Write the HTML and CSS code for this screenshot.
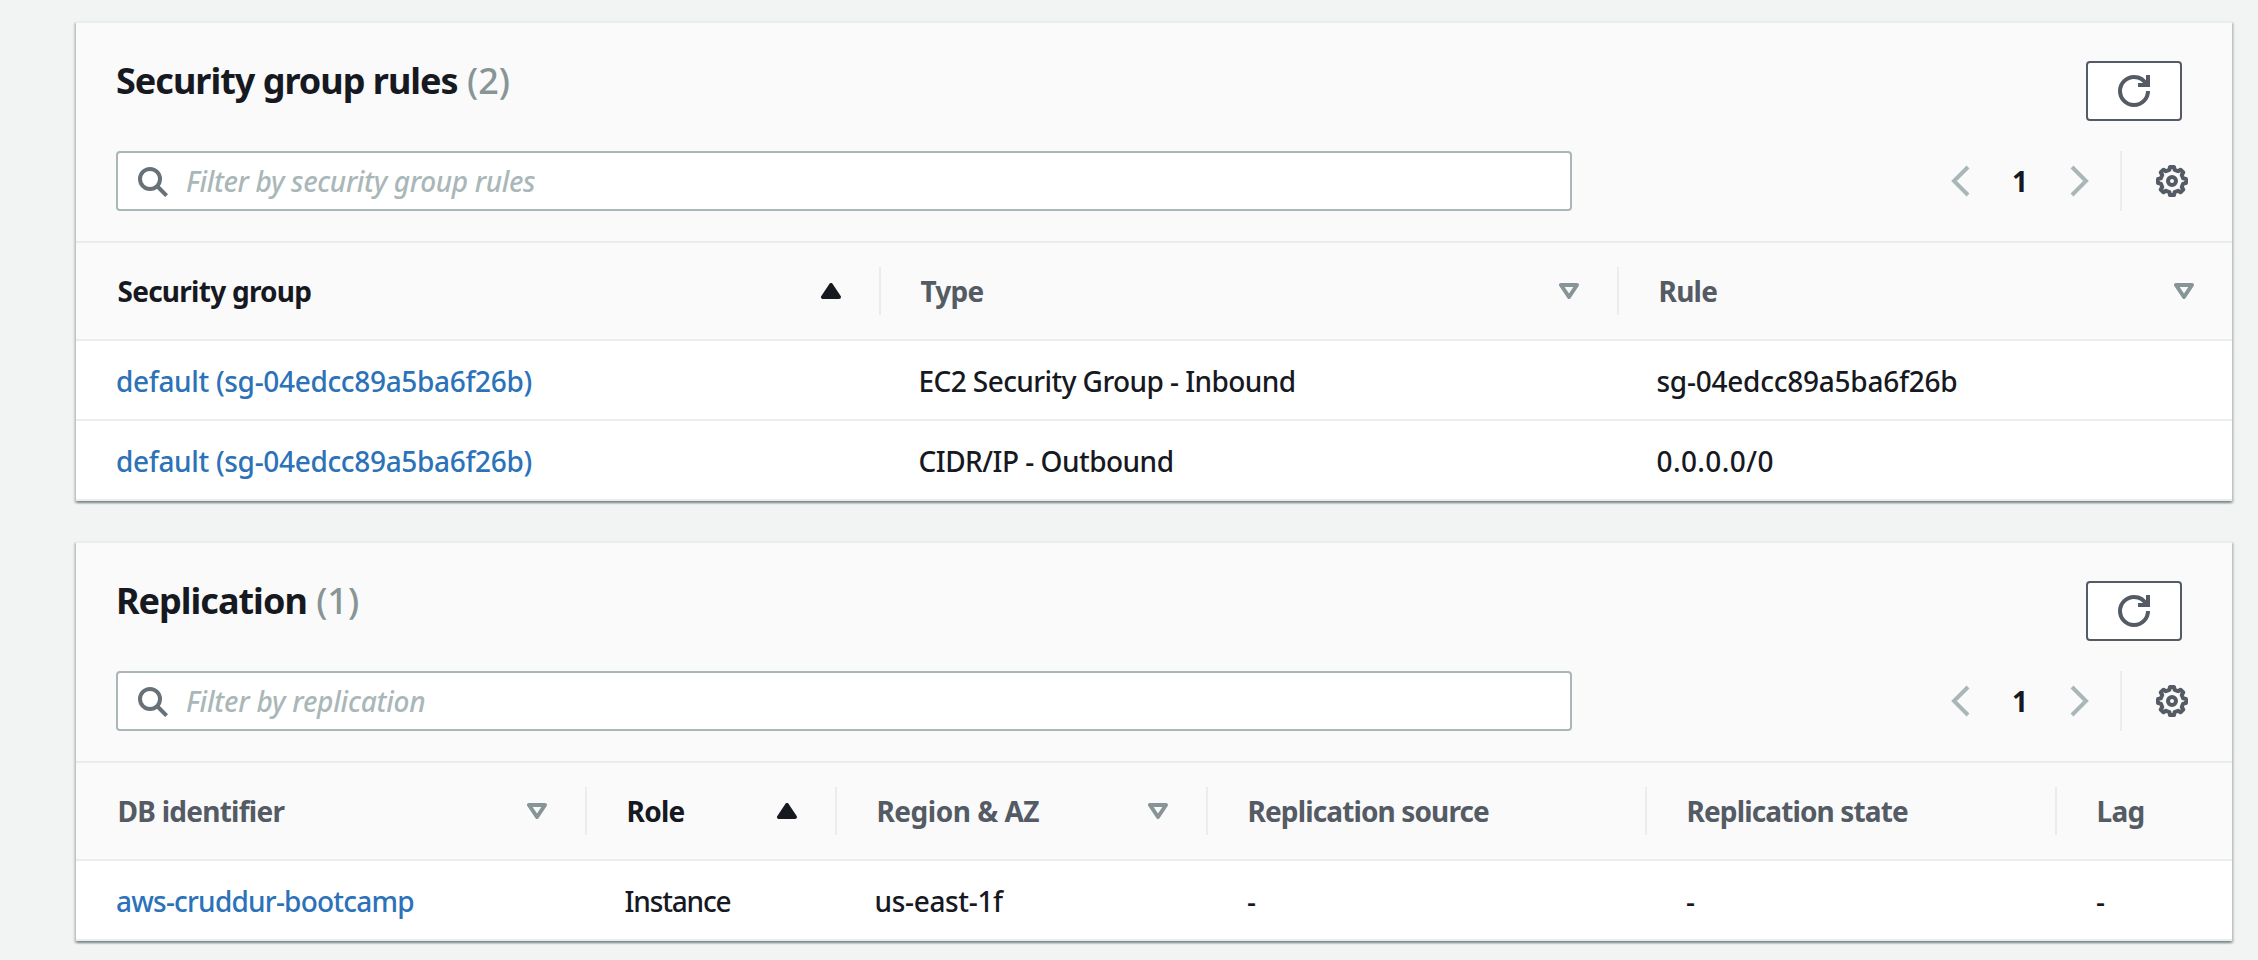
FILE: index.html
```html
<!DOCTYPE html>
<html lang="en">
<head>
<meta charset="utf-8">
<title>Connectivity &amp; security</title>
<link rel="stylesheet" href="styles.css">
</head>
<body>
<svg width="0" height="0" class="sprite" aria-hidden="true">
  <symbol id="search" viewBox="0 0 32 32"><circle cx="14" cy="14" r="10"/><path d="M21 21l9.6 9.6"/></symbol>
  <symbol id="refresh" viewBox="0 0 32 32"><path d="M30 16c0 7.74-6.26 14-14 14S2 23.74 2 16 8.26 2 16 2c5.58 0 10.4 3.26 12.66 8M30 0v10H20"/></symbol>
  <symbol id="prev" viewBox="0 0 32 32"><path d="M22 2L8 16l14 14"/></symbol>
  <symbol id="next" viewBox="0 0 32 32"><path d="M8 2l14 14L8 30"/></symbol>
  <symbol id="gear" viewBox="-16 -16 32 32"><circle r="4"/><path stroke-linejoin="round" d="M-2-14L2-14 2.6-11.2 6.08-9.76 8.49-11.31 11.31-8.49 9.76-6.08 11.2-2.6 14-2 14 2 11.2 2.6 9.76 6.08 11.31 8.49 8.49 11.31 6.08 9.76 2.6 11.2 2 14-2 14-2.6 11.2-6.08 9.76-8.49 11.31-11.31 8.49-9.76 6.08-11.2 2.6-14 2-14-2-11.2-2.6-9.76-6.08-11.31-8.49-8.49-11.31-6.08-9.76-2.6-11.2z"/></symbol>
  <symbol id="sort" viewBox="0 0 20 16"><path stroke-linejoin="round" d="M2 2h16l-8 12z"/></symbol>
  <symbol id="sorted" viewBox="0 0 20 16"><path stroke-linejoin="round" fill="currentColor" d="M2 14h16L10 2z"/></symbol>
</svg>
<main class="page">
  <section class="panel">
    <header class="panel-head">
      <div class="title-row">
        <h2 class="title">Security group rules <span class="count">(2)</span></h2>
        <button class="refresh" aria-label="Refresh"><svg class="icon"><use href="#refresh"/></svg></button>
      </div>
      <div class="tools">
        <div class="filter"><svg class="icon"><use href="#search"/></svg><span class="placeholder">Filter by security group rules</span></div>
        <div class="pager">
          <svg class="icon arrow"><use href="#prev"/></svg><span class="page-no">1</span><svg class="icon arrow"><use href="#next"/></svg>
          <span class="rule"></span><svg class="icon gear"><use href="#gear"/></svg>
        </div>
      </div>
    </header>
    <div class="table rules">
      <div class="row head">
        <div class="th active"><span>Security group</span><svg class="sort"><use href="#sorted"/></svg></div>
        <div class="th"><span>Type</span><svg class="sort"><use href="#sort"/></svg></div>
        <div class="th"><span>Rule</span><svg class="sort"><use href="#sort"/></svg></div>
      </div>
      <div class="row">
        <div class="td"><a class="link">default (sg-04edcc89a5ba6f26b)</a></div>
        <div class="td tight">EC2 Security Group - Inbound</div>
        <div class="td id">sg-04edcc89a5ba6f26b</div>
      </div>
      <div class="row">
        <div class="td"><a class="link">default (sg-04edcc89a5ba6f26b)</a></div>
        <div class="td snug">CIDR/IP - Outbound</div>
        <div class="td loose">0.0.0.0/0</div>
      </div>
    </div>
  </section>

  <section class="panel">
    <header class="panel-head">
      <div class="title-row">
        <h2 class="title">Replication <span class="count">(1)</span></h2>
        <button class="refresh" aria-label="Refresh"><svg class="icon"><use href="#refresh"/></svg></button>
      </div>
      <div class="tools">
        <div class="filter"><svg class="icon"><use href="#search"/></svg><span class="placeholder wide">Filter by replication</span></div>
        <div class="pager">
          <svg class="icon arrow"><use href="#prev"/></svg><span class="page-no">1</span><svg class="icon arrow"><use href="#next"/></svg>
          <span class="rule"></span><svg class="icon gear"><use href="#gear"/></svg>
        </div>
      </div>
    </header>
    <div class="table replicas">
      <div class="row head">
        <div class="th"><span>DB identifier</span><svg class="sort"><use href="#sort"/></svg></div>
        <div class="th active"><span>Role</span><svg class="sort"><use href="#sorted"/></svg></div>
        <div class="th region"><span>Region &amp; AZ</span><svg class="sort"><use href="#sort"/></svg></div>
        <div class="th long"><span>Replication source</span></div>
        <div class="th long"><span>Replication state</span></div>
        <div class="th"><span>Lag</span></div>
      </div>
      <div class="row">
        <div class="td narrow"><a class="link">aws-cruddur-bootcamp</a></div>
        <div class="td narrower">Instance</div>
        <div class="td">us-east-1f</div>
        <div class="td empty">-</div>
        <div class="td empty">-</div>
        <div class="td empty">-</div>
      </div>
    </div>
  </section>
</main>
</body>
</html>
```

FILE: styles.css
```css
* { box-sizing: border-box; }

body {
  margin: 0;
  background: #f2f3f3;
  color: #16191f;
  font: 500 28px/40px "Noto Sans", "Open Sans", sans-serif;
}

.sprite { display: block; }

.page {
  display: flex;
  flex-direction: column;
  gap: 40px;
  min-height: 960px;
  padding: 21px 26px 0 76px;
}

.panel {
  background: #fff;
  border-top: 2px solid #eaeded;
  box-shadow:
    0 2px 2px 0 rgba(0, 28, 36, .3),
    2px 2px 2px 0 rgba(0, 28, 36, .15),
    -2px 2px 2px 0 rgba(0, 28, 36, .15);
}

.panel-head {
  height: 220px;
  padding: 38px 44px 0 40px;
  background: #fafafa;
  border-bottom: 2px solid #eaeded;
}

.title-row {
  display: flex;
  justify-content: space-between;
  align-items: flex-start;
  padding-right: 6px;
}

.title {
  margin: 0;
  font-size: 36px;
  line-height: 40px;
  font-weight: 700;
  letter-spacing: -1px;
}
.count { margin-left: 1px; color: #879596; font-weight: 500; letter-spacing: 0; }

.icon {
  display: block;
  flex: none;
  width: 32px;
  height: 32px;
  fill: none;
  stroke: currentColor;
  stroke-width: 4;
}

.refresh {
  display: flex;
  align-items: center;
  justify-content: center;
  width: 96px;
  height: 60px;
  padding: 0;
  background: #fff;
  border: 2px solid #545b64;
  border-radius: 4px;
  color: #545b64;
}

.tools {
  display: flex;
  justify-content: space-between;
  margin-top: 30px;
}

.filter {
  display: flex;
  align-items: center;
  gap: 18px;
  width: 1456px;
  height: 60px;
  padding-left: 18px;
  background: #fff;
  border: 2px solid #aab7b8;
  border-radius: 4px;
  color: #687078;
}
.placeholder { color: #aab7b8; font-style: italic; letter-spacing: -.35px; }
.wide { letter-spacing: -.22px; }

.pager { display: flex; align-items: center; }
.arrow { color: #aab7b8; }
.page-no { width: 86px; padding-right: 2px; text-align: center; font-weight: 700; }
.rule { width: 2px; height: 60px; margin: 0 34px 0 24px; background: #eaeded; }
.gear { color: #545b64; }

.row {
  display: grid;
  height: 80px;
  border-bottom: 2px solid #eaeded;
}
.rules .row { grid-template-columns: 805px 738px 613px; }
.replicas .row { grid-template-columns: 511px 250px 371px 439px 410px 175px; }
.head { height: 98px; background: #fafafa; }

.th {
  display: flex;
  align-items: center;
  justify-content: space-between;
  height: 48px;
  margin: 24px 0;
  padding: 0 38px 0 39.5px;
  border-right: 2px solid #eaeded;
  color: #545b64;
  font-weight: 700;
  letter-spacing: -.74px;
}
.th:first-child { padding-left: 41.5px; }
.th:last-child { border-right: 0; }
.long { letter-spacing: -.87px; }
.region { letter-spacing: -.5px; }

.sort {
  flex: none;
  width: 20px;
  height: 16px;
  fill: none;
  stroke: currentColor;
  stroke-width: 4;
  color: #879596;
}
.active, .active .sort { color: #16191f; }

.td {
  display: flex;
  align-items: center;
  padding: 1px 0 0 37.5px;
  letter-spacing: -.33px;
  white-space: pre;
}
.td:first-child { padding-left: 40px; }
.td.empty { padding-left: 39px; }
.link { color: #2b72b9; }
.tight { letter-spacing: -.58px; }
.snug { letter-spacing: -.52px; }
.id { letter-spacing: -.24px; }
.loose { letter-spacing: .4px; }
.narrow { letter-spacing: -.78px; }
.narrower { letter-spacing: -1.15px; }
```
